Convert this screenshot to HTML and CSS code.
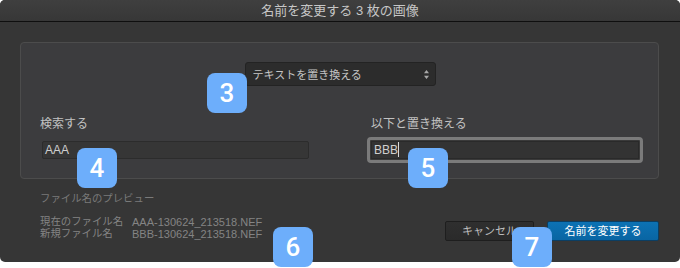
FILE: index.html
```html
<!DOCTYPE html>
<html lang="ja">
<head>
<meta charset="utf-8">
<link rel="stylesheet" href="styles.css">
</head>
<body>
<div class="window">
  <div class="titlebar">名前を変更する 3 枚の画像</div>
  <div class="content">
    <div class="panel">
      <div class="select-row">
        <div class="select">
          <span class="select-text">テキストを置き換える</span>
          <svg class="select-arrows" width="7" height="11" viewBox="0 0 7 11"><path d="M3.5 1 L6 4.2 H1 Z M3.5 10 L6 6.8 H1 Z" fill="#a8a8a8"/></svg>
        </div>
      </div>
      <div class="fields">
        <div class="col">
          <div class="label">検索する</div>
          <div class="field field-left">AAA</div>
        </div>
        <div class="col">
          <div class="label">以下と置き換える</div>
          <div class="focus-ring"><div class="field field-focus">BBB<span class="caret"></span></div></div>
        </div>
      </div>
    </div>
    <div class="bottom">
      <div class="preview">
        <div class="preview-title">ファイル名のプレビュー</div>
        <div class="preview-row"><span class="pv-key">現在のファイル名</span><span class="pv-val">AAA-130624_213518.NEF</span></div>
        <div class="preview-row"><span class="pv-key">新規ファイル名</span><span class="pv-val">BBB-130624_213518.NEF</span></div>
      </div>
      <div class="buttons">
        <div class="btn btn-cancel">キャンセル</div>
        <div class="btn btn-primary">名前を変更する</div>
      </div>
    </div>
  </div>
</div>
<div class="badge b3">3</div>
<div class="badge b4">4</div>
<div class="badge b5">5</div>
<div class="badge b6">6</div>
<div class="badge b7">7</div>
</body>
</html>
```
FILE: styles.css
```css
html, body {
  margin: 0;
  padding: 0;
  background: #ffffff;
}
body {
  position: relative;
  width: 680px;
  height: 268px;
  overflow: hidden;
  font-family: "Liberation Sans", "Noto Sans CJK JP", sans-serif;
}
.window {
  width: 680px;
  height: 262px;
  background: #363636;
  border-radius: 5px;
  overflow: hidden;
}
.titlebar {
  height: 21px;
  border-bottom: 1px solid #0f0f0f;
  background: linear-gradient(#3f3f3f, #373737);
  color: #c6c6c6;
  font-size: 13px;
  line-height: 22px;
  text-align: center;
}
.content {
  padding: 20px 21px 0 20px;
}
.panel {
  box-sizing: border-box;
  height: 137px;
  border: 1px solid #4c4c4c;
  border-radius: 4px;
  background: #3c3c3e;
  padding: 19px 19px 0 19px;
}
.select-row {
  display: flex;
  justify-content: center;
}
.select {
  box-sizing: border-box;
  width: 191px;
  height: 24px;
  border: 1px solid #232323;
  border-radius: 3px;
  background: #2c2c2c;
  display: flex;
  align-items: center;
  justify-content: space-between;
  padding: 0 5px 0 7px;
  margin-left: 1px;
}
.select-text {
  color: #c4c4c4;
  font-size: 11px;
}
.select-arrows {
  display: block;
}
.fields {
  display: grid;
  grid-template-columns: 269px 268px;
  column-gap: 62px;
  margin-top: 30px;
}
.label {
  color: #c2c2c2;
  font-size: 12px;
  line-height: 16px;
  height: 16px;
  margin-bottom: 9px;
}
.field {
  height: 16px;
  border: 1px solid #2c2c2c;
  background: #363636;
  color: #cfcfcf;
  font-size: 12px;
  line-height: 17px;
  padding: 0 2px;
  box-sizing: content-box;
}
.field-left {
  margin-left: 2px;
  border-radius: 2px;
}
.focus-ring {
  margin: -4px;
  border: 3px solid #7b7b7b;
  border-radius: 4px;
  padding: 1px;
  background: #3a3a3a;
}
.field-focus {
  background: #333333;
  border-color: #2a2a2a;
}
.caret {
  display: inline-block;
  width: 1px;
  height: 15px;
  background: #d8d8d8;
  vertical-align: -3px;
}
.bottom {
  display: flex;
  justify-content: space-between;
  align-items: flex-start;
}
.preview {
  padding-left: 20px;
  padding-top: 13px;
  color: #848484;
  font-size: 10.4px;
}
.preview-title {
  line-height: 14px;
  margin-bottom: 10px;
  color: #7a7a7a;
}
.preview-row {
  display: flex;
  line-height: 12px;
  height: 12px;
}
.pv-key {
  width: 92px;
}
.pv-val {
  font-size: 11px;
}
.buttons {
  display: flex;
  gap: 13px;
  margin-top: 42px;
}
.btn {
  height: 18px;
  font-size: 11px;
  line-height: 18px;
  text-align: center;
  border-radius: 2px;
}
.btn-cancel {
  width: 87px;
  border: 1px solid #1e1e1e;
  background: linear-gradient(#2f2f2f, #2a2a2a);
  color: #bdbdbd;
}
.btn-primary {
  width: 110px;
  border: 1px solid #0c3e62;
  background: linear-gradient(#0c72b4, #0965a3);
  color: #ffffff;
}
.badge {
  position: absolute;
  width: 40px;
  height: 40px;
  border-radius: 8px;
  background: #6daefb;
  color: #ffffff;
  font-family: "Roboto", "Liberation Sans", sans-serif;
  font-weight: 500;
  font-size: 26px;
  line-height: 40px;
  text-align: center;
}
.b3 { left: 207px; top: 73px; }
.b4 { left: 77px; top: 148px; }
.b5 { left: 408px; top: 148px; }
.b6 { left: 273px; top: 227px; }
.b7 { left: 512px; top: 227px; }
```
